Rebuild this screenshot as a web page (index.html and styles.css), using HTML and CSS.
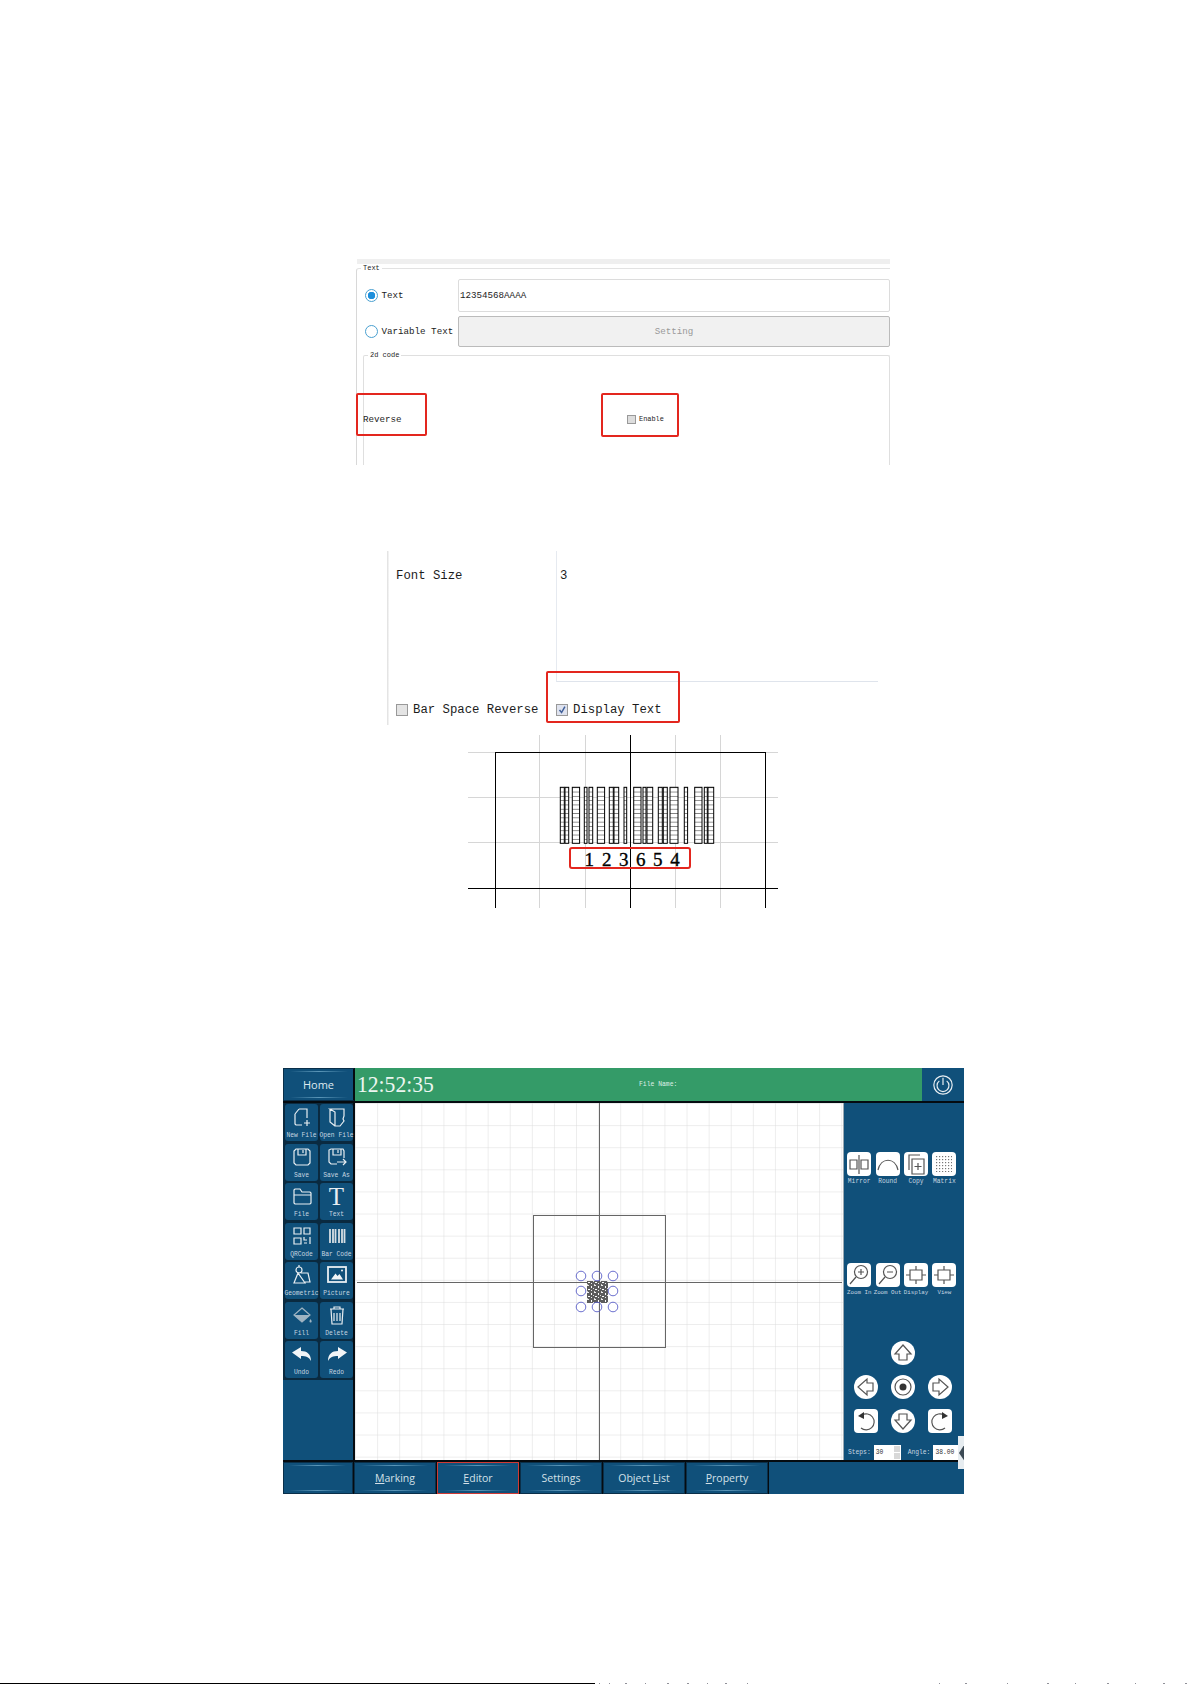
FILE: index.html
```html
<!DOCTYPE html>
<html lang="en">
<head>
  <meta charset="UTF-8" />
  <meta name="viewport" content="width=device-width, initial-scale=1" />
  <title>Barcode editor manual</title>
  <link rel="stylesheet" href="styles.css">
</head>
<body>

  <!-- shared icons -->
  <svg class="defs" aria-hidden="true">
    <defs>
      <pattern id="grid" x="1" y="1" width="22.1" height="22.1" patternUnits="userSpaceOnUse">
        <path d="M22.1 0V22.1M0 22.1H22.1" fill="none" stroke="#dcdcdc" stroke-width="1" />
      </pattern>
      <pattern id="hatch" width="5" height="4.3" y="52.3" patternUnits="userSpaceOnUse">
        <rect width="5" height="4.3" fill="#fff" />
        <path d="M0 0H5" stroke="#222" stroke-width="1" />
      </pattern>
      <pattern id="speck" width="7" height="7" patternUnits="userSpaceOnUse">
        <rect width="7" height="7" fill="#5c5c5c" />
        <rect x="1" y="0" width="2" height="1" fill="#eee" />
        <rect x="5" y="1" width="1" height="2" fill="#fff" />
        <rect x="0" y="3" width="1" height="1" fill="#ddd" />
        <rect x="2" y="4" width="2" height="1" fill="#fff" />
        <rect x="5" y="5" width="1" height="1" fill="#eee" />
        <rect x="1" y="6" width="1" height="1" fill="#ccc" />
      </pattern>
      <pattern id="dots" width="3" height="3" patternUnits="userSpaceOnUse">
        <rect x="1" y="1" width="1.2" height="1.2" fill="#777" />
      </pattern>
    </defs>
    <symbol id="i-new" viewBox="0 0 22 22"><path d="M8 3h8v9M4 8l4-5M4 8v10l1 1h6M16 14v6M13 17h6" /></symbol>
    <symbol id="i-open" viewBox="0 0 22 22"><path d="M4 3h14v7l-1 3 1 2-4 5H9V6zM4 3v13l5 4" /></symbol>
    <symbol id="i-save" viewBox="0 0 22 22"><path d="M5 3h12l2 2v12l-2 2H5l-2-2V5zM7 3v6h8V3M12 4v3" /></symbol>
    <symbol id="i-saveas" viewBox="0 0 22 22"><path d="M11 18H5l-2-2V4l2-1h12l1 2v7M7 3v6h8V3M12 4v3M11 16h9M17 13l3 3-3 3" /></symbol>
    <symbol id="i-folder" viewBox="0 0 22 22"><path d="M3 5l1-1h5l2 3h8l1 1v10l-1 1H4l-1-1zM3 10h17" /></symbol>
    <symbol id="i-qr" viewBox="0 0 22 22"><path d="M3 3h7v6H3zM13 3h6v6h-6zM3 13h7v6H3zM13 12v3h3M19 12v7M13 18h3" /></symbol>
    <symbol id="i-geo" viewBox="0 0 22 22"><circle cx="8" cy="6" r="3" /><path d="M8 1v2M7 9l-4 10h11zM10 9h7l2 9h-5" /></symbol>
    <symbol id="i-delete" viewBox="0 0 22 22"><path d="M4 5h14M8 5V3h6v2M5 5l1 15h10l1-15M8 9v8M11 9v8M14 9v8" /></symbol>
    <symbol id="i-mirror" viewBox="0 0 24 24"><path d="M3 8h7v9H3zM14 8h7v9h-7zM12 3v19" /></symbol>
    <symbol id="i-round" viewBox="0 0 24 24"><path d="M2 18C5 5 19 5 22 18" /></symbol>
    <symbol id="i-copy" viewBox="0 0 24 24"><path d="M5 18V3h11M8 7h12v15H8zM14 11v7M10.500 14.500h7" /></symbol>
    <symbol id="i-zoomin" viewBox="0 0 24 24"><circle cx="14" cy="9" r="6.500" /><path d="M9 14l-6 7M14 6v6M11 9h6" /></symbol>
    <symbol id="i-zoomout" viewBox="0 0 24 24"><circle cx="14" cy="9" r="6.500" /><path d="M9 14l-6 7M11 9h6" /></symbol>
    <symbol id="i-frame" viewBox="0 0 24 24"><path d="M6 7h12v10H6zM12 3v4M12 17v4M2 12h4M18 12h4" /></symbol>
    <symbol id="i-arrow" viewBox="0 0 24 24"><path d="M12 4l8 9h-4v6H8v-6H4z" /></symbol>
    <symbol id="i-ccw" viewBox="0 0 24 24"><path d="M8 6a8 8 0 1 1-1 13" /><path class="solid" d="M4 7l6-4v7z" /></symbol>
    <symbol id="i-cw" viewBox="0 0 24 24"><path d="M16 6a8 8 0 1 0 1 13" /><path class="solid" d="M20 7l-6-4v7z" /></symbol>
  </svg>

  <div class="page">

    <!-- figure 1: text dialog -->
    <section class="fig-text">
      <div class="strip"></div>
      <div class="group">
        <span class="legend legend-text">Text</span>
        <div class="opt-row">
          <label class="radio-line"><span class="radio radio-on"></span>Text</label>
          <div class="text-input">12354568AAAA</div>
        </div>
        <div class="opt-row opt-row-second">
          <label class="radio-line"><span class="radio"></span>Variable Text</label>
          <div class="setting-btn">Setting</div>
        </div>
        <div class="group-code">
          <span class="legend legend-code">2d code</span>
          <div class="reverse-row">
            <span class="reverse-label">Reverse</span>
            <span class="check-tiny"></span>
            <span class="enable-label">Enable</span>
          </div>
        </div>
      </div>
      <div class="mark mark-reverse"></div>
      <div class="mark mark-enable"></div>
    </section>

    <!-- figure 2: property table -->
    <section class="fig-props">
      <div class="prop-name">Font Size</div>
      <div class="prop-value">3</div>
      <div class="prop-check prop-check-left"><span class="check"></span>Bar Space Reverse</div>
      <div class="prop-check"><span class="check check-on"><svg viewBox="0 0 12 12"><path d="M3 6l2.500 3L9.500 2" /></svg></span>Display Text</div>
      <div class="mark mark-display"></div>
    </section>

    <!-- figure 3: barcode preview -->
    <svg class="fig-barcode" viewBox="0 0 310 173">
      <path class="guide" d="M71 0V173M117 0V173M207 0V173M252 0V173M0 17H310M0 62H310M0 107H310" />
      <path class="axis" d="M27 173V17H297V173M162 0V173M0 153H310" />
      <g class="bars">
        <rect x="92.300" y="52.300" width="4" height="56" />
        <rect x="97" y="52.300" width="3.700" height="56" />
        <rect x="104.300" y="52.300" width="7.300" height="56" />
        <rect x="116.300" y="52.300" width="2.700" height="56" />
        <rect x="121" y="52.300" width="3.700" height="56" />
        <rect x="129.300" y="52.300" width="7.300" height="56" />
        <rect x="141.300" y="52.300" width="4" height="56" />
        <rect x="146" y="52.300" width="4.700" height="56" />
        <rect x="156" y="52.300" width="2.700" height="56" />
        <rect x="165.700" y="52.300" width="7.300" height="56" />
        <rect x="175" y="52.300" width="3" height="56" />
        <rect x="179" y="52.300" width="5.700" height="56" />
        <rect x="190.300" y="52.300" width="4" height="56" />
        <rect x="195.300" y="52.300" width="4" height="56" />
        <rect x="202" y="52.300" width="8" height="56" />
        <rect x="216.300" y="52.300" width="3.300" height="56" />
        <rect x="226.700" y="52.300" width="7.300" height="56" />
        <rect x="236.300" y="52.300" width="3" height="56" />
        <rect x="240" y="52.300" width="5.700" height="56" />
      </g>
      <g class="digits">
        <text x="121.300" y="131">1</text>
        <text x="138.700" y="131">2</text>
        <text x="155.700" y="131">3</text>
        <text x="172.700" y="131">6</text>
        <text x="189.700" y="131">5</text>
        <text x="207" y="131">4</text>
      </g>
      <rect class="mark-svg" x="102" y="113" width="120" height="20" rx="2" />
    </svg>

    <!-- figure 4: editor screen -->
    <section class="hmi">
      <header class="hmi-top">
        <div class="home shine">Home</div>
        <div class="status">
          <span class="clock">12:52:35</span>
          <span class="file-name">File Name:</span>
        </div>
        <div class="power">
          <svg viewBox="0 0 24 24"><circle cx="12" cy="12" r="10" /><path d="M8 7.500a6.500 6.500 0 1 0 8 0M12 4v8" /></svg>
        </div>
      </header>

      <aside class="tools">
        <div class="tool-grid">
          <div class="tool"><svg class="ico"><use href="#i-new" /></svg><span>New File</span></div>
          <div class="tool"><svg class="ico"><use href="#i-open" /></svg><span>Open File</span></div>
          <div class="tool"><svg class="ico"><use href="#i-save" /></svg><span>Save</span></div>
          <div class="tool"><svg class="ico"><use href="#i-saveas" /></svg><span>Save As</span></div>
          <div class="tool"><svg class="ico"><use href="#i-folder" /></svg><span>File</span></div>
          <div class="tool"><b class="ico-t">T</b><span>Text</span></div>
          <div class="tool"><svg class="ico"><use href="#i-qr" /></svg><span>QRCode</span></div>
          <div class="tool">
            <svg class="ico" viewBox="0 0 22 22"><path class="fat" d="M4 4v14M7 4v14M9.500 4v14M13 4v14M16 4v14M18.500 4v14" /></svg>
            <span>Bar Code</span>
          </div>
          <div class="tool"><svg class="ico"><use href="#i-geo" /></svg><span>Geometric</span></div>
          <div class="tool">
            <svg class="ico" viewBox="0 0 22 22">
              <rect class="thick" x="2" y="3" width="18" height="15" />
              <path class="fill" d="M5 15.500l4.500-6 2 2.500 2-2 3.500 5.500z" />
              <circle class="fill" cx="16" cy="6.500" r="1" />
            </svg>
            <span>Picture</span>
          </div>
          <div class="tool">
            <svg class="ico ico-dim" viewBox="0 0 22 22">
              <path d="M11 4l8 7-8 7-8-7z" />
              <path class="fill" d="M3 11h16l-8 7zM19.500 15c1 1.500 1.500 2 1 3s-2 .5-2-.5 .5-1.500 1-2.500z" />
            </svg>
            <span>Fill</span>
          </div>
          <div class="tool"><svg class="ico"><use href="#i-delete" /></svg><span>Delete</span></div>
          <div class="tool">
            <svg class="ico" viewBox="0 0 22 22"><path class="fill" d="M1 9.500L10 4v4c6 0 10 3 10 10-2-4-5-5-10-5v3z" /></svg>
            <span>Undo</span>
          </div>
          <div class="tool">
            <svg class="ico" viewBox="0 0 22 22"><path class="fill" d="M21 9.500L12 4v4c-6 0-10 3-10 10 2-4 5-5 10-5v3z" /></svg>
            <span>Redo</span>
          </div>
        </div>
      </aside>

      <svg class="canvas" viewBox="0 0 488 357">
        <rect width="488" height="357" fill="url(#grid)" />
        <path class="canvas-line" d="M244.500 0V357M2 179H487M178 112H310V244H178z" />
        <rect x="232" y="178" width="21" height="22" fill="url(#speck)" />
        <g class="handles">
          <circle cx="226" cy="173" r="4.800" />
          <circle cx="242" cy="173" r="4.800" />
          <circle cx="258" cy="173" r="4.800" />
          <circle cx="226" cy="188" r="4.800" />
          <circle cx="258" cy="188" r="4.800" />
          <circle cx="226" cy="204" r="4.800" />
          <circle cx="242" cy="204" r="4.800" />
          <circle cx="258" cy="204" r="4.800" />
        </g>
      </svg>

      <aside class="side">
        <div class="side-row">
          <div class="side-btn"><div class="white-btn"><svg class="ico-dark"><use href="#i-mirror" /></svg></div><span>Mirror</span></div>
          <div class="side-btn"><div class="white-btn"><svg class="ico-dark"><use href="#i-round" /></svg></div><span>Round</span></div>
          <div class="side-btn"><div class="white-btn"><svg class="ico-dark"><use href="#i-copy" /></svg></div><span>Copy</span></div>
          <div class="side-btn"><div class="white-btn"><svg class="ico-dark ico-dots" viewBox="0 0 24 24"><rect x="4" y="4" width="16" height="16" fill="url(#dots)" /></svg></div><span>Matrix</span></div>
        </div>
        <div class="side-row side-row-zoom">
          <div class="side-btn"><div class="white-btn"><svg class="ico-dark"><use href="#i-zoomin" /></svg></div><span>Zoom In</span></div>
          <div class="side-btn"><div class="white-btn"><svg class="ico-dark"><use href="#i-zoomout" /></svg></div><span>Zoom Out</span></div>
          <div class="side-btn"><div class="white-btn"><svg class="ico-dark"><use href="#i-frame" /></svg></div><span>Display</span></div>
          <div class="side-btn"><div class="white-btn"><svg class="ico-dark"><use href="#i-frame" /></svg></div><span>View</span></div>
        </div>
        <div class="nav">
          <div class="nav-btn nav-up"><svg class="ico-dark"><use href="#i-arrow" /></svg></div>
          <div class="nav-btn nav-left"><svg class="ico-dark rot-left"><use href="#i-arrow" /></svg></div>
          <div class="nav-btn">
            <svg class="ico-dark" viewBox="0 0 24 24"><circle cx="12" cy="12" r="8" /><circle class="solid" cx="12" cy="12" r="3.500" /></svg>
          </div>
          <div class="nav-btn"><svg class="ico-dark rot-right"><use href="#i-arrow" /></svg></div>
          <div class="nav-btn nav-square"><svg class="ico-dark"><use href="#i-ccw" /></svg></div>
          <div class="nav-btn"><svg class="ico-dark rot-down"><use href="#i-arrow" /></svg></div>
          <div class="nav-btn nav-square"><svg class="ico-dark"><use href="#i-cw" /></svg></div>
        </div>
        <div class="spin-row">
          <span>Steps:</span>
          <div class="spin spin-steps">30<i class="spin-arrows"></i></div>
          <span class="angle-label">Angle:</span>
          <div class="spin spin-angle">38.00</div>
        </div>
      </aside>

      <nav class="tabs">
        <div class="tab tab-first shine"></div>
        <div class="tab shine"><u>M</u>arking</div>
        <div class="tab tab-active shine"><u>E</u>ditor</div>
        <div class="tab shine">Settings</div>
        <div class="tab shine">Object <u>L</u>ist</div>
        <div class="tab shine"><u>P</u>roperty</div>
        <div class="tab-rest"></div>
      </nav>

      <div class="side-handle"><svg viewBox="0 0 8 33"><path d="M8 6L1 17l7 10z" /></svg></div>
    </section>

    <!-- cut off line of the next page -->
    <div class="page-edge">
      <div class="edge-line"></div>
      <svg class="edge-ticks" viewBox="0 0 596 1">
        <path stroke="#223" d="M4 0h1M14 0h1M30 0h2M50 0h1M72 0h2M92 0h2M112 0h1M130 0h2M152 0h1M344 0h1M370 0h2M412 0h1M452 0h2M480 0h1M512 0h2M540 0h1M568 0h2M590 0h2" />
      </svg>
    </div>
  </div>

</body>
</html>
```

FILE: styles.css
```css
html, body {
  margin: 0;
  padding: 0;
  background: #fff;
}

body {
  height: 1685px;
  overflow: hidden;
  font-family: "Liberation Mono", monospace;
  color: #1c1c1c;
}

.defs {
  position: absolute;
  width: 0;
  height: 0;
}

.page {
  display: flex;
  flex-direction: column;
  align-items: flex-start;
}

.mark {
  position: absolute;
  border: 2px solid #e3261e;
  border-radius: 2px;
  box-sizing: border-box;
}

/* figure 1 */
.fig-text {
  position: relative;
  box-sizing: border-box;
  width: 534px;
  height: 206px;
  margin: 259px 0 0 356px;
  overflow: hidden;
  font-size: 9.2px;
}

.strip {
  height: 5px;
  margin-left: 1px;
  background: #efefef;
}

.group {
  position: relative;
  height: 240px;
  margin-top: 4px;
  padding: 10px 0 0 6px;
  box-sizing: border-box;
  border-top: 1px solid #e2e2e2;
  border-left: 1px solid #d8d8d8;
  border-top-left-radius: 3px;
}

.legend {
  position: absolute;
  padding: 0 2px;
  background: #fff;
  font-size: 7px;
  line-height: 8px;
}

.legend-text {
  top: -5px;
  left: 4px;
}

.legend-code {
  top: -5px;
  left: 4px;
}

.opt-row {
  display: grid;
  grid-template-columns: 95px 1fr;
  height: 32px;
  align-items: center;
}

.opt-row-second {
  height: 30px;
  margin-top: 5px;
}

.radio-line {
  display: flex;
  align-items: center;
  gap: 3.5px;
  padding-left: 2px;
}

.radio {
  box-sizing: border-box;
  width: 13px;
  height: 13px;
  border: 1.5px solid #4aa0d0;
  border-radius: 50%;
  background: #fff;
}

.radio-on {
  background: radial-gradient(circle, #1d8fdc 0 3.5px, #fff 4px);
}

.text-input {
  box-sizing: border-box;
  height: 100%;
  padding-left: 1px;
  border: 1px solid #dcdcdc;
  border-radius: 2px;
  line-height: 31px;
}

.setting-btn {
  box-sizing: border-box;
  height: 100%;
  border: 1px solid #bbb;
  border-radius: 2px;
  background: #f1f1f1;
  color: #999;
  line-height: 29px;
  text-align: center;
}

.group-code {
  position: relative;
  height: 140px;
  margin-top: 9px;
  border: 1px solid #dfdfdf;
  border-radius: 2px;
  border-bottom: 0;
}

.reverse-row {
  display: flex;
  align-items: center;
  height: 14px;
  margin: 56px 0 0 -1px;
}

.reverse-label {
  width: 264px;
}

.check-tiny {
  box-sizing: border-box;
  width: 9px;
  height: 9px;
  border: 1px solid #999;
  background: #ddd;
}

.enable-label {
  margin-left: 3px;
  font-size: 6.9px;
}

.mark-reverse {
  left: 0;
  top: 134px;
  width: 71px;
  height: 43px;
}

.mark-enable {
  left: 245px;
  top: 134px;
  width: 78px;
  height: 44px;
}

/* figure 2 */
.fig-props {
  position: relative;
  display: grid;
  grid-template-columns: 169px 322px;
  grid-template-rows: 131px 43px;
  margin: 86px 0 0 387px;
  font-size: 12.3px;
  background: linear-gradient(#e4e4e4, #e4e4e4) left top / 1.5px 100% no-repeat;
}

.prop-name {
  padding: 18px 0 0 9px;
  line-height: 14px;
}

.prop-value {
  padding: 18px 0 0 3px;
  line-height: 14px;
  border-left: 1px solid #e6eaf0;
  border-bottom: 1px solid #dfe4ec;
}

.prop-check {
  display: flex;
  align-items: center;
  gap: 5px;
  height: 14px;
  margin-top: 21px;
}

.prop-check-left {
  padding-left: 9px;
}

.check {
  box-sizing: border-box;
  width: 12px;
  height: 12px;
  border: 1px solid #999;
  background: #e4e4e4;
}

.check-on {
  background: #dfe3ef;
}

.check svg {
  display: block;
  width: 10px;
  height: 10px;
  fill: none;
  stroke: #3f5f9a;
  stroke-width: 1.8;
}

.mark-display {
  left: 159px;
  top: 120px;
  width: 134px;
  height: 52px;
}

/* figure 3 */
.fig-barcode {
  display: block;
  width: 310px;
  height: 173px;
  margin: 10px 0 0 468px;
}

.guide {
  fill: none;
  stroke: #d6d6d6;
  stroke-width: 1;
  shape-rendering: crispEdges;
}

.axis {
  fill: none;
  stroke: #000;
  stroke-width: 1;
  shape-rendering: crispEdges;
}

.bars rect {
  fill: url(#hatch);
  stroke: #000;
  stroke-width: 1;
}

.digits text {
  font-family: "Liberation Serif", serif;
  font-size: 19px;
  text-anchor: middle;
  fill: #000;
  stroke: #000;
  stroke-width: 0.35;
}

.mark-svg {
  fill: none;
  stroke: #e3261e;
  stroke-width: 2;
}

/* figure 4 */
.hmi {
  position: relative;
  display: grid;
  grid-template-columns: 72px 488px 121px;
  grid-template-rows: 33px 357px 32px;
  row-gap: 2px;
  width: 681px;
  margin: 160px 0 0 283px;
  background: #050b10;
  color: #fff;
}

.shine {
  background:
    linear-gradient(90deg, transparent, #5b96b8, transparent) center 2px / 84% 1px no-repeat,
    linear-gradient(90deg, transparent, #5b96b8, transparent) center calc(100% - 2px) / 84% 1px no-repeat,
    #10507a;
}

.hmi-top {
  grid-column: 1 / 4;
  display: flex;
}

.home {
  box-sizing: border-box;
  width: 72px;
  border: 1px solid #0a2f49;
  border-right: 2px solid #050b10;
  font: 11px/31px "Open Sans", sans-serif;
  text-align: center;
  color: #dfe9ef;
}

.status {
  display: flex;
  flex: 1;
  align-items: center;
  padding-left: 2px;
  background: #349b68;
}

.clock {
  width: 282px;
  font: 24px "Liberation Serif", serif;
  color: #ecf6f0;
  transform: scaleX(0.9);
  transform-origin: left center;
}

.file-name {
  font-size: 6.4px;
  color: #dfeee6;
}

.power {
  display: flex;
  align-items: center;
  justify-content: center;
  width: 42px;
  background: #10507a;
}

.power svg {
  width: 22px;
  height: 22px;
  fill: none;
  stroke: #e8eef2;
  stroke-width: 1.3;
}

.tools {
  width: 70px;
  background: #10507a;
}

.tool-grid {
  display: grid;
  grid-template-columns: 33px 33px;
  grid-auto-rows: 37px;
  gap: 2.5px 2px;
  padding: 1px 0 1.5px 2px;
  background: #0a2a40;
}

.tool {
  display: flex;
  flex-direction: column;
  align-items: center;
  box-sizing: border-box;
  padding-top: 2px;
  border-radius: 3px;
  background: #10507a;
  font-size: 6.3px;
  line-height: 8px;
  white-space: nowrap;
  color: #c6d6e0;
}

.ico {
  display: block;
  flex: none;
  width: 22px;
  height: 22px;
  margin-bottom: 4px;
  fill: none;
  stroke: #e8eef2;
  stroke-width: 1.2;
}

.ico-dim {
  stroke: #9fb4c2;
}

.ico .fill {
  fill: #f2f5f7;
  stroke: none;
}

.ico-dim .fill {
  fill: #9fb4c2;
}

.ico .fat {
  stroke: #d5dde3;
  stroke-width: 1.8;
}

.ico .thick {
  stroke-width: 1.8;
}

.ico-t {
  height: 26px;
  font: 25px/23px "Liberation Serif", serif;
  font-weight: normal;
  color: #e8eef2;
}

.canvas {
  display: block;
  width: 488px;
  height: 357px;
  background: #fff;
}

.canvas-line {
  fill: none;
  stroke: #666;
  stroke-width: 1;
  shape-rendering: crispEdges;
}

.handles circle {
  fill: none;
  stroke: #5a5fc8;
  stroke-width: 0.9;
}

.side {
  box-sizing: border-box;
  padding: 49px 0 0 1px;
  border-left: 1px solid #9aa9b3;
  background: #10507a;
  overflow: hidden;
}

.side-row {
  display: grid;
  grid-template-columns: repeat(4, 28.4px);
}

.side-row-zoom {
  margin-top: 77px;
  font-size: 5.8px;
}

.side-btn {
  display: flex;
  flex-direction: column;
  align-items: center;
  overflow: hidden;
  font-size: 6.3px;
  line-height: 8px;
  white-space: nowrap;
  color: #c6d6e0;
}

.side-row-zoom .side-btn {
  font-size: 5.8px;
}

.side-btn span {
  margin-top: 2px;
}

.white-btn {
  width: 24px;
  height: 24px;
  border-radius: 4px;
  background: #fff;
}

.ico-dark {
  display: block;
  width: 24px;
  height: 24px;
  fill: none;
  stroke: #555;
  stroke-width: 1.2;
}

.ico-dots {
  stroke: none;
}

.solid {
  fill: #333;
  stroke: none;
}

.nav {
  display: grid;
  grid-template-columns: repeat(3, 37px);
  grid-auto-rows: 34px;
  justify-items: center;
  align-items: center;
  margin: 39px 0 0 2px;
}

.nav-btn {
  width: 24px;
  height: 24px;
  border-radius: 50%;
  background: #fff;
}

.nav-up {
  grid-column: 2;
}

.nav-left {
  grid-column: 1;
}

.nav-square {
  border-radius: 4px;
}

.rot-left {
  transform: rotate(-90deg);
}

.rot-right {
  transform: rotate(90deg);
}

.rot-down {
  transform: rotate(180deg);
}

.spin-row {
  display: flex;
  align-items: center;
  height: 15px;
  margin: 7px 0 0 3px;
  font-size: 6.3px;
  color: #c6d6e0;
}

.spin {
  position: relative;
  box-sizing: border-box;
  height: 15px;
  margin-left: 3px;
  padding-left: 2px;
  background: #fff;
  color: #333;
  line-height: 15px;
}

.spin-steps {
  width: 27px;
}

.spin-angle {
  width: 25px;
}

.angle-label {
  margin-left: 7px;
}

.spin-arrows {
  position: absolute;
  right: 1px;
  top: 1px;
  bottom: 1px;
  width: 6px;
  background: linear-gradient(#d8d8d8 0 45%, #fff 45% 55%, #d8d8d8 55%);
}

.tabs {
  grid-column: 1 / 4;
  display: flex;
  gap: 1px;
}

.tab {
  box-sizing: border-box;
  width: 82px;
  border: 1px solid #0a2f49;
  font: 10.5px/30px "Open Sans", sans-serif;
  text-align: center;
  color: #d4e0e8;
}

.tab-first {
  width: 70px;
}

.tab-active {
  border-color: #cf3a34;
}

.tab-rest {
  flex: 1;
  background: #10507a;
}

.side-handle {
  position: absolute;
  left: 675px;
  top: 368px;
  width: 6px;
  height: 33px;
  overflow: hidden;
  background: #e6ecf0;
}

.side-handle svg {
  display: block;
  width: 8px;
  height: 33px;
  fill: #3c4a55;
}

/* bottom of the page */
.page-edge {
  display: flex;
  width: 1191px;
  height: 1px;
  margin-top: 189px;
}

.edge-line {
  width: 595px;
  background: #000;
}

.edge-ticks {
  display: block;
  width: 596px;
  height: 1px;
}
```
